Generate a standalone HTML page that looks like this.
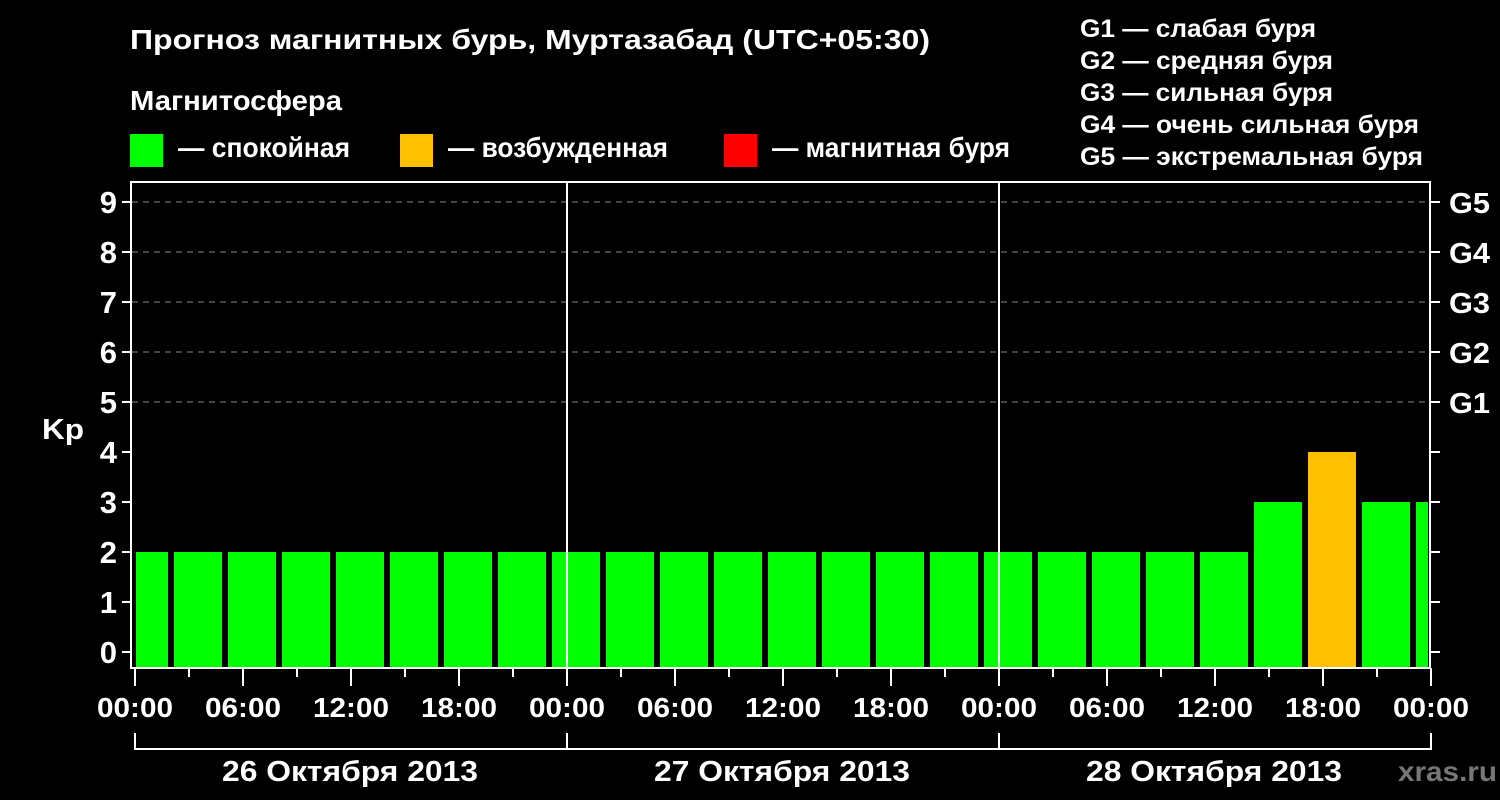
<!DOCTYPE html><html><head><meta charset="utf-8"><style>body{margin:0;background:#000;}svg{display:block}text{font-family:"Liberation Sans",sans-serif;font-weight:bold;fill:#fff}</style></head><body>
<svg width="1500" height="800" xmlns="http://www.w3.org/2000/svg">
<rect width="1500" height="800" fill="#000"/>
<text x="130" y="49" font-size="28" textLength="800" lengthAdjust="spacingAndGlyphs">Прогноз магнитных бурь, Муртазабад (UTC+05:30)</text>
<text x="130" y="110" font-size="28" textLength="212" lengthAdjust="spacingAndGlyphs">Магнитосфера</text>
<rect x="130" y="134" width="33" height="33" fill="#00ff00"/><text x="178" y="157" font-size="28" textLength="172" lengthAdjust="spacingAndGlyphs">— спокойная</text>
<rect x="400" y="134" width="33" height="33" fill="#ffc000"/><text x="448" y="157" font-size="28" textLength="220" lengthAdjust="spacingAndGlyphs">— возбужденная</text>
<rect x="724" y="134" width="33" height="33" fill="#ff0000"/><text x="772" y="157" font-size="28" textLength="238" lengthAdjust="spacingAndGlyphs">— магнитная буря</text>
<g font-size="25"><text x="1080" y="37" textLength="236" lengthAdjust="spacingAndGlyphs">G1 — слабая буря</text><text x="1080" y="69" textLength="253" lengthAdjust="spacingAndGlyphs">G2 — средняя буря</text><text x="1080" y="101" textLength="253" lengthAdjust="spacingAndGlyphs">G3 — сильная буря</text><text x="1080" y="133" textLength="339" lengthAdjust="spacingAndGlyphs">G4 — очень сильная буря</text><text x="1080" y="165" textLength="343" lengthAdjust="spacingAndGlyphs">G5 — экстремальная буря</text></g>
<g stroke="#888" stroke-width="1" stroke-dasharray="6,5"><line x1="132" y1="202" x2="1430" y2="202"/><line x1="132" y1="252" x2="1430" y2="252"/><line x1="132" y1="302" x2="1430" y2="302"/><line x1="132" y1="352" x2="1430" y2="352"/><line x1="132" y1="402" x2="1430" y2="402"/></g>
<g fill="#00ff00">
<rect x="136" y="552" width="32" height="116"/>
<rect x="174" y="552" width="48" height="116"/><rect x="228" y="552" width="48" height="116"/><rect x="282" y="552" width="48" height="116"/><rect x="336" y="552" width="48" height="116"/><rect x="390" y="552" width="48" height="116"/><rect x="444" y="552" width="48" height="116"/><rect x="498" y="552" width="48" height="116"/><rect x="552" y="552" width="48" height="116"/><rect x="606" y="552" width="48" height="116"/><rect x="660" y="552" width="48" height="116"/><rect x="714" y="552" width="48" height="116"/><rect x="768" y="552" width="48" height="116"/><rect x="822" y="552" width="48" height="116"/><rect x="876" y="552" width="48" height="116"/><rect x="930" y="552" width="48" height="116"/><rect x="984" y="552" width="48" height="116"/><rect x="1038" y="552" width="48" height="116"/><rect x="1092" y="552" width="48" height="116"/><rect x="1146" y="552" width="48" height="116"/><rect x="1200" y="552" width="48" height="116"/>
<rect x="1254" y="502" width="48" height="166"/><rect x="1362" y="502" width="48" height="166"/><rect x="1416" y="502" width="12" height="166"/>
</g>
<rect x="1308" y="452" width="48" height="216" fill="#ffc000"/>
<g stroke="#fff" stroke-width="2" fill="none">
<rect x="131" y="182" width="1299" height="486"/>
<line x1="567" y1="182" x2="567" y2="668"/><line x1="999" y1="182" x2="999" y2="668"/>
<path d="M122 202h9M122 252h9M122 302h9M122 352h9M122 402h9M122 452h9M122 502h9M122 552h9M122 602h9M122 652h9"/>
<path d="M1430 202h10M1430 252h10M1430 302h10M1430 352h10M1430 402h10M1430 452h10M1430 502h10M1430 552h10M1430 602h10M1430 652h10"/>
<path d="M135 668v18M567 668v18M999 668v18M1431 668v18"/>
<path d="M189 668v9M297 668v9M405 668v9M513 668v9M621 668v9M729 668v9M837 668v9M945 668v9M1053 668v9M1161 668v9M1269 668v9M1377 668v9"/>
<path d="M243 668v18M351 668v18M459 668v18M675 668v18M783 668v18M891 668v18M1107 668v18M1215 668v18M1323 668v18"/>
<path d="M135 733v16H1431v-16M567 733v16M999 733v16"/>
</g>
<g font-size="31" text-anchor="end"><text x="117" y="213">9</text><text x="117" y="263">8</text><text x="117" y="313">7</text><text x="117" y="363">6</text><text x="117" y="413">5</text><text x="117" y="463">4</text><text x="117" y="513">3</text><text x="117" y="563">2</text><text x="117" y="613">1</text><text x="117" y="663">0</text></g>
<text x="42" y="439" font-size="29" textLength="42" lengthAdjust="spacingAndGlyphs">Kp</text>
<g font-size="29"><text x="1449" y="213" textLength="41" lengthAdjust="spacingAndGlyphs">G5</text><text x="1449" y="263" textLength="41" lengthAdjust="spacingAndGlyphs">G4</text><text x="1449" y="313" textLength="41" lengthAdjust="spacingAndGlyphs">G3</text><text x="1449" y="363" textLength="41" lengthAdjust="spacingAndGlyphs">G2</text><text x="1449" y="413" textLength="41" lengthAdjust="spacingAndGlyphs">G1</text></g>
<g font-size="28"><text x="97" y="717" textLength="76" lengthAdjust="spacingAndGlyphs">00:00</text><text x="205" y="717" textLength="76" lengthAdjust="spacingAndGlyphs">06:00</text><text x="313" y="717" textLength="76" lengthAdjust="spacingAndGlyphs">12:00</text><text x="421" y="717" textLength="76" lengthAdjust="spacingAndGlyphs">18:00</text><text x="529" y="717" textLength="76" lengthAdjust="spacingAndGlyphs">00:00</text><text x="637" y="717" textLength="76" lengthAdjust="spacingAndGlyphs">06:00</text><text x="745" y="717" textLength="76" lengthAdjust="spacingAndGlyphs">12:00</text><text x="853" y="717" textLength="76" lengthAdjust="spacingAndGlyphs">18:00</text><text x="961" y="717" textLength="76" lengthAdjust="spacingAndGlyphs">00:00</text><text x="1069" y="717" textLength="76" lengthAdjust="spacingAndGlyphs">06:00</text><text x="1177" y="717" textLength="76" lengthAdjust="spacingAndGlyphs">12:00</text><text x="1285" y="717" textLength="76" lengthAdjust="spacingAndGlyphs">18:00</text><text x="1393" y="717" textLength="76" lengthAdjust="spacingAndGlyphs">00:00</text>
<text x="222" y="781" font-size="29" textLength="256" lengthAdjust="spacingAndGlyphs">26 Октября 2013</text><text x="654" y="781" font-size="29" textLength="256" lengthAdjust="spacingAndGlyphs">27 Октября 2013</text><text x="1086" y="781" font-size="29" textLength="256" lengthAdjust="spacingAndGlyphs">28 Октября 2013</text></g>
<text x="1398" y="781" font-size="28" textLength="99" lengthAdjust="spacingAndGlyphs" style="fill:#777">xras.ru</text>
</svg></body></html>
